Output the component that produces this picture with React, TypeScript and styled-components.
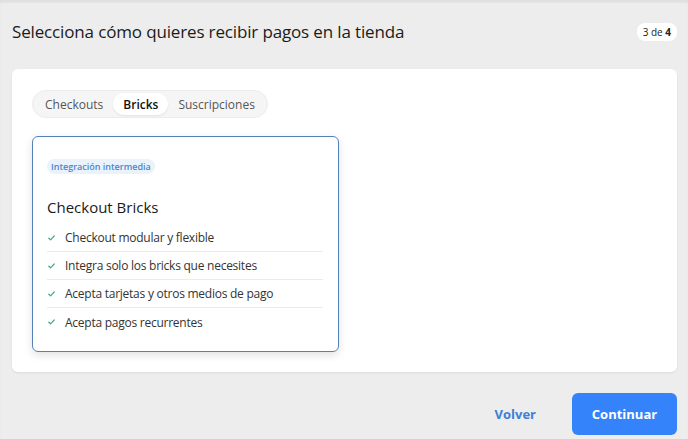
import React, { useState } from "react";
import styled, { createGlobalStyle } from "styled-components";

const Global = createGlobalStyle`
  html, body { margin: 0; padding: 0; background: #ededed; }
  body { font-family: "Open Sans", "Liberation Sans", sans-serif; color: #1a1a1a; }
  * { box-sizing: border-box; }
`;

const Page = styled.div`
  width: 688px;
  height: 439px;
  background: #ededed;
  border-top: 2px solid #e0e0e0;
  box-shadow: inset 0 1px 2px rgba(0,0,0,0.04);
  display: flex;
  flex-direction: column;
  padding: 0 11px 0 12px;
`;

const Header = styled.div`
  display: flex;
  align-items: center;
  justify-content: space-between;
  height: 57px;
  padding-top: 2px;
`;

const Title = styled.h1`
  margin: 0;
  font-size: 17px;
  font-weight: 400;
  letter-spacing: -0.15px;
  color: #1b1b1b;
`;

const StepBadge = styled.div`
  background: #fff;
  border-radius: 8px;
  padding: 2px 6px;
  font-size: 10px;
  color: #222;
  b { font-weight: 700; }
`;

const Panel = styled.div`
  margin-top: 10px;
  background: #fff;
  border-radius: 6px;
  height: 303px;
  padding: 21px 21px 0 20px;
  box-shadow: 0 1px 2px rgba(0,0,0,0.08);
`;

const Tabs = styled.div`
  display: inline-flex;
  align-items: center;
  background: #f5f5f5;
  border: 1px solid #ececec;
  border-radius: 14px;
  padding: 2px 2px;
  height: 28px;
`;

const Tab = styled.button<{ $active?: boolean }>`
  border: none;
  font-family: inherit;
  font-size: 12px;
  cursor: pointer;
  height: 22px;
  padding: 0 10px;
  border-radius: 11px;
  background: ${(p) => (p.$active ? "#fff" : "transparent")};
  color: ${(p) => (p.$active ? "#111" : "#555")};
  font-weight: ${(p) => (p.$active ? 600 : 400)};
  box-shadow: ${(p) => (p.$active ? "0 1px 2px rgba(0,0,0,0.08)" : "none")};
`;

const Card = styled.div`
  margin-top: 18px;
  width: 307px;
  height: 216px;
  border: 1.5px solid #5582b6;
  border-radius: 6px;
  padding: 16px 15px 0 14px;
  box-shadow: 0 3px 8px rgba(0,0,0,0.12);
`;

const Level = styled.span`
  display: inline-block;
  background: #eaf2fc;
  color: #4a86cf;
  font-size: 9px;
  font-weight: 600;
  border-radius: 8px;
  padding: 1px 4px;
`;

const CardTitle = styled.h2`
  margin: 22px 0 7px;
  font-size: 15px;
  font-weight: 500;
  color: #1a1a1a;
`;

const List = styled.ul`
  list-style: none;
  margin: 0;
  padding: 0;
`;

const Item = styled.li<{ $last?: boolean }>`
  display: flex;
  align-items: center;
  gap: 10px;
  height: 28px;
  font-size: 12px;
  letter-spacing: -0.25px;
  color: #333;
  border-bottom: ${(p) => (p.$last ? "none" : "1px solid #ebebeb")};
  padding-left: 1px;
`;

const Footer = styled.div`
  display: flex;
  justify-content: flex-end;
  align-items: center;
  gap: 36px;
  margin-top: 21px;
`;

const Back = styled.button`
  border: none;
  background: transparent;
  padding: 0;
  color: #3d7fd6;
  font-family: inherit;
  font-weight: 700;
  font-size: 13px;
  cursor: pointer;
`;

const Primary = styled.button`
  border: none;
  background: #3483fa;
  color: #fff;
  font-family: inherit;
  font-weight: 700;
  font-size: 13px;
  border-radius: 6px;
  width: 105px;
  height: 42px;
  cursor: pointer;
`;

const Check = () => (
  <svg width="7" height="6" viewBox="0 0 7 6" fill="none">
    <path d="M0.8 3.2 L2.6 4.8 L6.2 1" stroke="#4aa38a" strokeWidth="1.2" strokeLinecap="round" strokeLinejoin="round" />
  </svg>
);

const items = [
  "Checkout modular y flexible",
  "Integra solo los bricks que necesites",
  "Acepta tarjetas y otros medios de pago",
  "Acepta pagos recurrentes",
];

export default function App() {
  const [tab, setTab] = useState("Bricks");
  return (
    <>
      <Global />
      <Page>
        <Header>
          <Title>Selecciona cómo quieres recibir pagos en la tienda</Title>
          <StepBadge>3 de <b>4</b></StepBadge>
        </Header>
        <Panel>
          <Tabs>
            {["Checkouts", "Bricks", "Suscripciones"].map((t) => (
              <Tab key={t} $active={tab === t} onClick={() => setTab(t)}>
                {t}
              </Tab>
            ))}
          </Tabs>
          <Card>
            <Level>Integración intermedia</Level>
            <CardTitle>Checkout Bricks</CardTitle>
            <List>
              {items.map((it, i) => (
                <Item key={it} $last={i === items.length - 1}>
                  <Check />
                  {it}
                </Item>
              ))}
            </List>
          </Card>
        </Panel>
        <Footer>
          <Back>Volver</Back>
          <Primary>Continuar</Primary>
        </Footer>
      </Page>
    </>
  );
}
